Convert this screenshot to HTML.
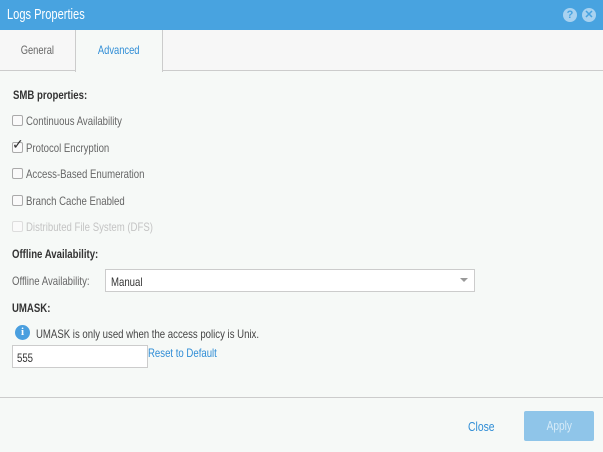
<!DOCTYPE html>
<html><head><style>
*{margin:0;padding:0;box-sizing:border-box}
body{width:603px;height:452px;background:#f6f9f7;font-family:"Liberation Sans",sans-serif;font-size:12px;color:#555;position:relative;overflow:hidden}
.a{position:absolute;white-space:nowrap}
.n{transform:scaleX(.8);transform-origin:0 0}
.s{display:inline-block;transform:scaleX(.78)}
.hdr{left:0;top:0;width:603px;height:30px;background:#48a3e0}
.ic{width:14px;height:14px;border-radius:50%;background:#a9d2f0;color:#48a3e0;font-size:11px;font-weight:bold;text-align:center;line-height:14px;top:8px}
.tabs{left:0;top:30px;width:603px;height:41px;background:#f7f7f7;border-bottom:1px solid #ccc}
.tab{top:30px;height:42px;line-height:41px;text-align:center;font-size:12px}
.cb{width:11px;height:11px;border:1px solid #aaa;border-radius:2px;background:#fafafa}
.lbl{font-size:12px;color:#666}
.b{font-weight:bold;color:#333}
</style></head><body>
<div class="a hdr"></div>
<div class="a n" style="left:7px;top:6px;color:#fff;font-size:15px;transform:scaleX(.74)">Logs Properties</div>
<div class="a ic" style="left:563px">?</div>
<div class="a ic" style="left:582px">✕</div>
<div class="a tabs"></div>
<div class="a tab" style="left:0;width:75px;color:#666"><span class="s">General</span></div>
<div class="a tab" style="left:75px;width:88px;background:#f6f9f7;border-left:1px solid #ccc;border-right:1px solid #ccc;color:#2f8dd6"><span class="s">Advanced</span></div>
<div class="a b n" style="left:13px;top:88px">SMB properties:</div>
<div class="a cb" style="left:12px;top:115px"></div><div class="a lbl n" style="left:26px;top:114px">Continuous Availability</div>
<div class="a cb" style="left:12px;top:142px"></div><div class="a" style="left:12px;top:136px;font-size:14px;color:#333">✓</div><div class="a lbl n" style="left:26px;top:141px">Protocol Encryption</div>
<div class="a cb" style="left:12px;top:168px"></div><div class="a lbl n" style="left:26px;top:167px">Access-Based Enumeration</div>
<div class="a cb" style="left:12px;top:195px"></div><div class="a lbl n" style="left:26px;top:194px">Branch Cache Enabled</div>
<div class="a cb" style="left:12px;top:221px;border-color:#ddd"></div><div class="a lbl n" style="left:26px;top:220px;color:#c4c4c4">Distributed File System (DFS)</div>
<div class="a b n" style="left:12px;top:247px">Offline Availability:</div>
<div class="a lbl n" style="left:12px;top:274px">Offline Availability:</div>
<div class="a" style="left:105px;top:269px;width:370px;height:23px;border:1px solid #ccc;background:#fff"></div>
<div class="a n" style="left:111px;top:275px;color:#333">Manual</div>
<div class="a" style="left:460px;top:278px;width:0;height:0;border-left:4px solid transparent;border-right:4px solid transparent;border-top:4px solid #999"></div>
<div class="a b n" style="left:12px;top:301px">UMASK:</div>
<div class="a" style="left:15px;top:325px;width:15px;height:15px;border-radius:50%;background:#4a9fdf;color:#fff;font-size:11px;font-weight:bold;text-align:center;line-height:15px;font-family:'Liberation Serif',serif">i</div>
<div class="a n" style="left:36px;top:327px;color:#444">UMASK is only used when the access policy is Unix.</div>
<div class="a" style="left:12px;top:345px;width:136px;height:23px;border:1px solid #ccc;background:#fff"></div>
<div class="a n" style="left:17px;top:351px;color:#333">555</div>
<div class="a n" style="left:148px;top:346px;color:#2f8dd6">Reset to Default</div>
<div class="a" style="left:0;top:397px;width:603px;height:1px;background:#ccc"></div>
<div class="a n" style="left:468px;top:419px;font-size:13px;color:#2f8dd6">Close</div>
<div class="a" style="left:524px;top:411px;width:70px;height:30px;background:#8fc5e9;border-radius:2px;text-align:center;line-height:30px"><span class="s" style="color:#d6ebf8;font-size:13px">Apply</span></div>
</body></html>
